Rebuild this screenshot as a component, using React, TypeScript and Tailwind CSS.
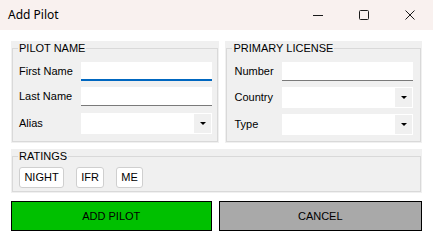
import React from "react"

const TextBox = ({ focused = false }: { focused?: boolean }) => (
  <div
    className={
      "h-[19px] flex-1 bg-white " +
      (focused ? "border-b-2 border-[#0067c0]" : "border-b border-[#7a7a7a]")
    }
  />
)

const ComboBox = () => (
  <div className="h-[21px] flex-1 bg-white flex justify-end">
    <div className="w-[17px] my-[1px] mr-[1px] bg-[#f0f0f0] flex items-center justify-center">
      <div className="w-0 h-0 border-l-[3px] border-r-[3px] border-t-[3px] border-l-transparent border-r-transparent border-t-black" />
    </div>
  </div>
)

const Group = ({
  title,
  className,
  children,
}: {
  title: string
  className: string
  children: React.ReactNode
}) => (
  <div className={"bg-[#f0f0f0] pt-[1px] px-[1px] pb-[1px] flex flex-col " + className}>
    <fieldset className="flex-1 border border-[#d9d9d9] min-w-0">
      <legend className="ml-[5px] px-[1px] text-[11px] leading-[12px] text-black">{title}</legend>
      {children}
    </fieldset>
  </div>
)

const Row = ({ label, labelW, children }: { label: string; labelW: string; children: React.ReactNode }) => (
  <div className="flex items-center">
    <span className={"text-[11px] text-black shrink-0 " + labelW}>{label}</span>
    {children}
  </div>
)

export default function App() {
  const ratings = [
    { name: "NIGHT", w: "w-[45px]" },
    { name: "IFR", w: "w-[28px]" },
    { name: "ME", w: "w-[27px]" },
  ]

  return (
    <div
      className="w-[433px] h-[242px] bg-white overflow-hidden flex flex-col"
      style={{ fontFamily: '"Liberation Sans", Arial, sans-serif' }}
    >
      {/* title bar */}
      <div className="h-[30px] bg-[#f9f1ef] flex items-center justify-between shrink-0">
        <span
          className="pl-[8px] text-[12px] text-black"
          style={{ fontFamily: '"Noto Sans", "Open Sans", sans-serif' }}
        >
          Add Pilot
        </span>
        <div className="flex h-full">
          <div className="w-[46px] h-full flex items-center justify-center">
            <svg width="10" height="10" viewBox="0 0 10 10">
              <path d="M0 5.5h10" stroke="#1a1a1a" strokeWidth="1" />
            </svg>
          </div>
          <div className="w-[46px] h-full flex items-center justify-center">
            <svg width="10" height="10" viewBox="0 0 10 10">
              <rect x="0.5" y="0.5" width="9" height="9" rx="1" fill="none" stroke="#1a1a1a" strokeWidth="1" />
            </svg>
          </div>
          <div className="w-[46px] h-full flex items-center justify-center">
            <svg width="10" height="10" viewBox="0 0 10 10">
              <path d="M0.5 0.5l9 9M9.5 0.5l-9 9" stroke="#1a1a1a" strokeWidth="1" />
            </svg>
          </div>
        </div>
      </div>

      {/* body */}
      <div className="px-[11px] pt-[11px] flex flex-col">
        <div className="flex gap-[6px]">
          <Group title="PILOT NAME" className="w-[209px] h-[102px]">
            <div className="pl-[6px] pr-[5px] pt-[8px] flex flex-col">
              <Row label="First Name" labelW="w-[62px]">
                <TextBox focused />
              </Row>
              <div className="mt-[6px]">
                <Row label="Last Name" labelW="w-[62px]">
                  <TextBox />
                </Row>
              </div>
              <div className="mt-[7px]">
                <Row label="Alias" labelW="w-[62px]">
                  <ComboBox />
                </Row>
              </div>
            </div>
          </Group>
          <Group title="PRIMARY LICENSE" className="w-[197px] h-[102px]">
            <div className="pl-[7px] pr-[7px] pt-[8px] flex flex-col">
              <Row label="Number" labelW="w-[48px]">
                <TextBox />
              </Row>
              <div className="mt-[6px]">
                <Row label="Country" labelW="w-[48px]">
                  <ComboBox />
                </Row>
              </div>
              <div className="mt-[6px]">
                <Row label="Type" labelW="w-[48px]">
                  <ComboBox />
                </Row>
              </div>
            </div>
          </Group>
        </div>

        <Group title="RATINGS" className="mt-[6px] h-[44px]">
          <div className="pl-[6px] pt-[5px] flex gap-[12px]">
            {ratings.map((r) => (
              <div
                key={r.name}
                className={
                  "h-[21px] bg-white border border-[#cfcfcf] rounded-[3px] flex items-center justify-center text-[11px] text-black " +
                  r.w
                }
              >
                {r.name}
              </div>
            ))}
          </div>
        </Group>

        <div className="mt-[8px] flex gap-[7px]">
          <button className="w-[201px] h-[30px] bg-[#00c000] border-[1.5px] border-black text-[11px] text-black">
            ADD PILOT
          </button>
          <button className="w-[204px] h-[30px] bg-[#a9a9a9] border-[1.5px] border-black text-[11px] text-black">
            CANCEL
          </button>
        </div>
      </div>
    </div>
  )
}
